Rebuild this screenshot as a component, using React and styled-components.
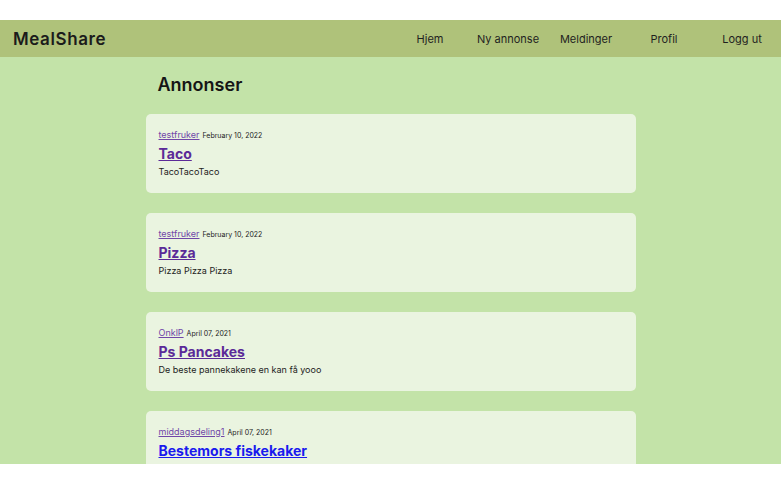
import React from 'react';
import styled, { createGlobalStyle } from 'styled-components';

const GlobalStyle = createGlobalStyle`
  body {
    margin: 0;
    background: #ffffff;
    font-family: Inter, "Noto Sans", sans-serif;
  }
`;

const Page = styled.div`
  margin-top: 20px;
  height: 444px;
  overflow: hidden;
  background-color: #c3e3a8;
`;

const Header = styled.header`
  display: flex;
  align-items: center;
  justify-content: space-between;
  height: 37px;
  background-color: #afc27a;
  padding-left: 13px;
`;

const Logo = styled.div`
  font-size: 17px;
  font-weight: 600;
  color: #1b1b1b;
  letter-spacing: 0.6px;
`;

const Nav = styled.nav`
  display: flex;
`;

const NavItem = styled.a`
  width: 78px;
  text-align: center;
  font-size: 11px;
  color: #1f1f1f;
  text-decoration: none;
  cursor: pointer;
`;

const Main = styled.main`
  width: 490px;
  margin: 0 auto;
`;

const Heading = styled.h1`
  margin: 0;
  padding: 17px 0 19px 12px;
  font-size: 18px;
  font-weight: 600;
  color: #151515;
`;

const Card = styled.article`
  background-color: #eaf4e0;
  border-radius: 5px;
  padding: 15px 13px 14px;
  height: 79px;
  box-sizing: border-box;
  margin-bottom: 20px;
`;

const Meta = styled.div`
  display: flex;
  align-items: baseline;
  gap: 3px;
`;

const User = styled.a`
  font-size: 9px;
  color: #7046a8;
  text-decoration: underline;
`;

const Date = styled.span`
  font-size: 7px;
  color: #222;
`;

const Title = styled.a`
  display: inline-block;
  margin-top: 5px;
  font-size: 14px;
  font-weight: 700;
  color: ${(props) => (props.visited ? '#5b2a98' : '#1a1aee')};
  text-decoration: underline;
`;

const Body = styled.p`
  margin: 3px 0 0;
  font-size: 9px;
  color: #222;
`;

const posts = [
  { user: 'testfruker', date: 'February 10, 2022', title: 'Taco', text: 'TacoTacoTaco', visited: true },
  { user: 'testfruker', date: 'February 10, 2022', title: 'Pizza', text: 'Pizza Pizza Pizza', visited: true },
  { user: 'OnklP', date: 'April 07, 2021', title: 'Ps Pancakes', text: 'De beste pannekakene en kan få yooo', visited: true },
  { user: 'middagsdeling1', date: 'April 07, 2021', title: 'Bestemors fiskekaker', visited: false },
];

const App = () => {
  return (
    <>
      <GlobalStyle />
      <Page>
        <Header>
          <Logo>MealShare</Logo>
          <Nav>
            <NavItem>Hjem</NavItem>
            <NavItem>Ny annonse</NavItem>
            <NavItem>Meldinger</NavItem>
            <NavItem>Profil</NavItem>
            <NavItem>Logg ut</NavItem>
          </Nav>
        </Header>
        <Main>
          <Heading>Annonser</Heading>
          {posts.map((post, i) => (
            <Card key={i}>
              <Meta>
                <User>{post.user}</User>
                <Date>{post.date}</Date>
              </Meta>
              <Title visited={post.visited}>{post.title}</Title>
              {post.text && <Body>{post.text}</Body>}
            </Card>
          ))}
        </Main>
      </Page>
    </>
  );
};

export default App;
